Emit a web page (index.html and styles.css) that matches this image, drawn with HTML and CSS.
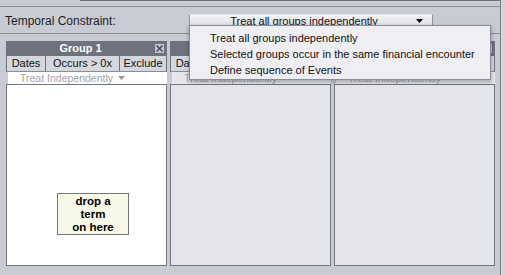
FILE: index.html
```html
<!DOCTYPE html>
<html>
<head>
<meta charset="utf-8">
<link rel="stylesheet" href="styles.css">
</head>
<body>
<div class="app">
  <div class="topbar"><div class="topbar-edge"></div></div>
  <div class="constraint">
    <div class="label">Temporal Constraint:</div>
    <div class="select">
      <span class="select-text">Treat all groups independently</span>
      <svg class="arrow" width="7" height="4" viewBox="0 0 7 4"><path d="M0 0H7L3.5 4Z" fill="#000"/></svg>
    </div>
  </div>
  <div class="groups">
    <div class="col">
      <div class="ghead"><span class="gtitle">Group 1</span><span class="close"><svg width="7" height="7" viewBox="0 0 7 7"><path d="M0.5 0.5L6.5 6.5M6.5 0.5L0.5 6.5" stroke="#3c3e46" stroke-width="1.2"/></svg></span></div>
      <div class="tabs"><div class="tab">Dates</div><div class="tab">Occurs &gt; 0x</div><div class="tab">Exclude</div></div>
      <div class="treat first">Treat Independently <svg width="7" height="4" viewBox="0 0 7 4"><path d="M0 0H7L3.5 4Z" fill="#9a9a9a"/></svg></div>
      <div class="body white">
        <div class="drop">drop a<br>term<br>on here</div>
      </div>
    </div>
    <div class="col">
      <div class="ghead"><span class="gtitle">Group 2</span><span class="close"><svg width="7" height="7" viewBox="0 0 7 7"><path d="M0.5 0.5L6.5 6.5M6.5 0.5L0.5 6.5" stroke="#3c3e46" stroke-width="1.2"/></svg></span></div>
      <div class="tabs"><div class="tab">Dates</div><div class="tab">Occurs &gt; 0x</div><div class="tab">Exclude</div></div>
      <div class="treat">Treat Independently <svg width="7" height="4" viewBox="0 0 7 4"><path d="M0 0H7L3.5 4Z" fill="#9a9a9a"/></svg></div>
      <div class="body"></div>
    </div>
    <div class="col">
      <div class="ghead"><span class="gtitle">Group 3</span><span class="close"><svg width="7" height="7" viewBox="0 0 7 7"><path d="M0.5 0.5L6.5 6.5M6.5 0.5L0.5 6.5" stroke="#3c3e46" stroke-width="1.2"/></svg></span></div>
      <div class="tabs"><div class="tab">Dates</div><div class="tab">Occurs &gt; 0x</div><div class="tab">Exclude</div></div>
      <div class="treat">Treat Independently <svg width="7" height="4" viewBox="0 0 7 4"><path d="M0 0H7L3.5 4Z" fill="#9a9a9a"/></svg></div>
      <div class="body"></div>
    </div>
  </div>
  <div class="menu">
    <div class="item">Treat all groups independently</div>
    <div class="item">Selected groups occur in the same financial encounter</div>
    <div class="item">Define sequence of Events</div>
  </div>
</div>
</body>
</html>
```
FILE: styles.css
```css
* { box-sizing: border-box; }
html, body { margin: 0; padding: 0; }
body {
  background: #d3d5dc;
  font-family: "Liberation Sans", Arial, sans-serif;
  width: 505px;
  height: 275px;
  overflow: hidden;
}
.app {
  position: relative;
  width: 501px;
  height: 275px;
  background: #c8cbd4;
  border-right: 1px solid #7b7e87;
}
.topbar {
  height: 7px;
  border-bottom: 1px solid #8a8d96;
}
.topbar-edge {
  margin-left: 80px;
  height: 6px;
  border-top: 1px solid #6e717b;
}
.constraint {
  height: 27px;
  border-bottom: 1px solid #8a8d96;
  display: flex;
  padding-top: 7px;
}
.label {
  width: 189px;
  padding-left: 5px;
  font-size: 12px;
  line-height: 14px;
  color: #1e1e1e;
}
.select {
  width: 244px;
  height: 13px;
  display: flex;
  align-items: center;
  background: linear-gradient(#f3f3f6, #dcdee5);
  border-left: 1px solid #8d9098;
  border-right: 1px solid #8d9098;
  border-top: 1px solid #e8e9ee;
  font-size: 11px;
  color: #111;
}
.select-text { flex: 1; text-align: center; padding-left: 6px; line-height: 12px; }
.arrow { margin-right: 9px; margin-left: 4px; }
.groups {
  display: flex;
  gap: 3px;
  padding: 7px 0 0 6px;
}
.col {
  width: 161px;
  display: flex;
  flex-direction: column;
}
.ghead {
  height: 15px;
  background: #6e717e;
  display: flex;
  align-items: center;
  color: #fff;
  font-weight: bold;
  font-size: 11px;
}
.gtitle { flex: 1; text-align: center; line-height: 15px; }
.close {
  width: 9px;
  height: 9px;
  margin-right: 3px;
  background: #c3c5cc;
  display: flex;
  align-items: center;
  justify-content: center;
}
.tabs {
  height: 16px;
  display: grid;
  grid-template-columns: 39px 74px 1fr;
  background: #d5d7de;
  border-left: 1px solid #6e717e;
  border-right: 1px solid #6e717e;
  border-bottom: 1px solid #8a8d96;
  font-size: 11px;
  color: #111;
}
.tab {
  text-align: center;
  line-height: 15px;
  border-right: 1px solid #6e717e;
}
.tab:last-child { border-right: none; }
.treat {
  height: 12px;
  margin-left: 2px;
  padding-left: 12px;
  font-size: 10.5px;
  line-height: 12px;
  color: #a2a3a8;
  background: #e6e7ec;
  white-space: nowrap;
  overflow: hidden;
}
.treat.first { background: #ffffff; }
.treat svg { margin-left: 2px; vertical-align: 2px; }
.body {
  height: 182px;
  border: 1px solid #74777f;
  background: #e4e5ea;
}
.body.white { background: #ffffff; }
.drop {
  margin: 108px 0 0 50px;
  width: 72px;
  height: 42px;
  border: 1px solid #75777f;
  background: #f8f8e8;
  font-weight: bold;
  font-size: 11.5px;
  line-height: 13px;
  text-align: center;
  color: #000;
  padding-top: 1px;
}
.menu {
  position: absolute;
  left: 189px;
  top: 25px;
  width: 302px;
  height: 55px;
  background: #efeff3;
  border: 1px solid #8b8d95;
  box-shadow: 0 2px 3px 1px rgba(0,0,0,0.22);
  padding-top: 4px;
  font-size: 11px;
  color: #111;
}
.item {
  height: 16px;
  line-height: 16px;
  padding-left: 20px;
  white-space: nowrap;
}
```
